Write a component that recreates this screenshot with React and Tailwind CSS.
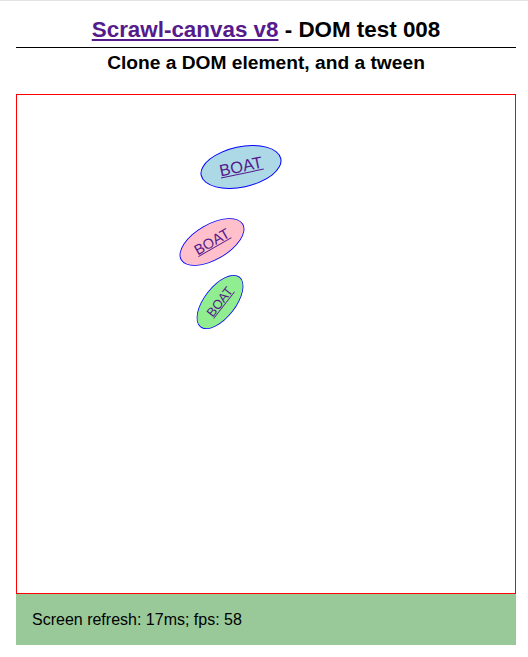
const boats = [
  {
    id: "b1",
    place: "left-[184px] top-[52px] rotate-[-12deg] scale-[1.03]",
    colour: "bg-[#add8e6]",
  },
  {
    id: "b2",
    place: "left-[155px] top-[127px] rotate-[-30deg] scale-90",
    colour: "bg-[#ffc0cb]",
  },
  {
    id: "b3",
    place: "left-[163px] top-[187px] rotate-[-52deg] scale-80",
    colour: "bg-[#90ee90]",
  },
];

const Boat = ({ place, colour }) => {
  return (
    <div
      className={`
        absolute
        ${place}
        ${colour}
        w-[80px]
        h-[40px]
        rounded-[50%]
        border
        border-[#0000ff]
        flex
        items-center
        justify-center
      `}
    >
      <a
        href="#"
        className="
          text-[16px]
          leading-[18px]
          underline
          text-[#551a8b]
        "
      >
        BOAT
      </a>
    </div>
  );
};

const App = () => {
  return (
    <div
      className="
        min-h-screen
        bg-white
        border-t
        border-[#e3e3e3]
        pt-[16px]
        pl-4
        text-black
        font-['Liberation_Sans',Arial,sans-serif]
      "
    >
      <div className="w-[500px]">

        {/* HEADER */}
        <h1
          className="
            text-center
            text-[22.4px]
            leading-[26px]
            font-bold
            pb-[4px]
            border-b
            border-black
          "
        >
          <a href="#" className="underline text-[#551a8b]">
            Scrawl-canvas v8
          </a>
          {" "}- DOM test 008
        </h1>

        <h2
          className="
            mt-[4px]
            text-center
            text-[19.2px]
            leading-[22px]
            font-bold
          "
        >
          Clone a DOM element, and a tween
        </h2>

        {/* STACK */}
        <div
          className="
            relative
            mt-[20px]
            h-[500px]
            border
            border-[#ff0000]
            overflow-hidden
          "
        >
          {boats.map((b) => (
            <Boat key={b.id} place={b.place} colour={b.colour} />
          ))}
        </div>

        {/* REPORT */}
        <div
          className="
            bg-[#99c999]
            px-4
            py-4
            text-[16px]
            leading-[19px]
          "
        >
          Screen refresh: 17ms; fps: 58
        </div>

      </div>
    </div>
  );
};

export default App;
